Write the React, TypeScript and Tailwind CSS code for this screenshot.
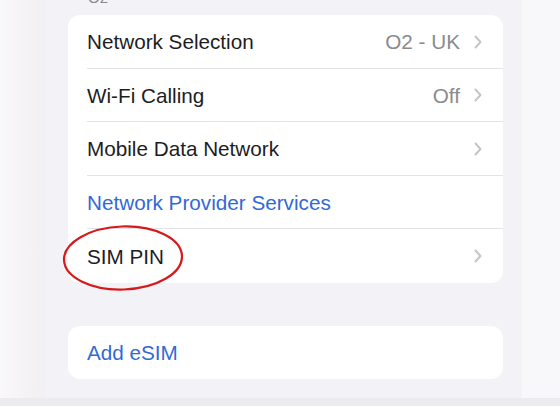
import React from "react";

const Chevron = () => (
  <svg width="10" height="14" viewBox="0 0 10 14" className="ml-[13px] shrink-0">
    <path d="M2.5 1.5 L7.5 7 L2.5 12.5" fill="none" stroke="#c4c4c8" strokeWidth="1.9" strokeLinecap="round" strokeLinejoin="round" />
  </svg>
);

function Row({ label, value, blue, chevron, last, children }: { label: string; value?: string; blue?: boolean; chevron?: boolean; last?: boolean; children?: React.ReactNode }) {
  return (
    <div className="relative pl-[19px]">
      <div className={`flex h-[53.5px] items-center pr-[20px] pt-[1px] ${last ? "" : "border-b border-[#e3e3e7]"}`}>
        <span className={`flex-1 ${blue ? "text-[#3169d6]" : "text-[#1d1d1f]"}`}>{label}</span>
        {value && <span className="text-[#8a8a8e]">{value}</span>}
        {chevron && <Chevron />}
      </div>
      {children}
    </div>
  );
}

export default function App() {
  return (
    <div className="w-[560px] h-[406px] overflow-hidden flex flex-col bg-[#ededf1]" style={{ fontFamily: '"Liberation Sans", Arial, sans-serif' }}>
      <div className="flex h-[398px]">
        <div className="w-[46px] bg-gradient-to-r from-[#f9f8fa] via-[#f6f3f5] to-[#f1f0f4]" />
        <div className="flex-1 bg-[#f2f2f7] pl-[22px] pr-[19px] flex flex-col text-[20.7px]">
          <div className="h-[15px] overflow-hidden pl-[20px] flex items-end">
            <span className="text-[15px] leading-none text-[#8a8a8e] mb-[10px]">O2</span>
          </div>
          <div className="bg-white rounded-[12px]">
            <Row label="Network Selection" value="O2 - UK" chevron />
            <Row label="Wi-Fi Calling" value="Off" chevron />
            <Row label="Mobile Data Network" chevron />
            <Row label="Network Provider Services" blue />
            <Row label="SIM PIN" chevron last>
              <svg className="absolute left-[-7px] top-[-5px] pointer-events-none" width="124" height="68" viewBox="0 0 124 68">
                <ellipse cx="62" cy="34" rx="59" ry="31.5" fill="none" stroke="#d41a1a" strokeWidth="2.2" transform="rotate(-2 62 34)" />
              </svg>
            </Row>
          </div>
          <div className="h-[43px]" />
          <div className="bg-white rounded-[12px]">
            <Row label="Add eSIM" blue last />
          </div>
        </div>
        <div className="w-[38px] bg-[#f8f8fa]" />
      </div>
      <div className="h-[8px] bg-[#ececf0]" />
    </div>
  );
}
